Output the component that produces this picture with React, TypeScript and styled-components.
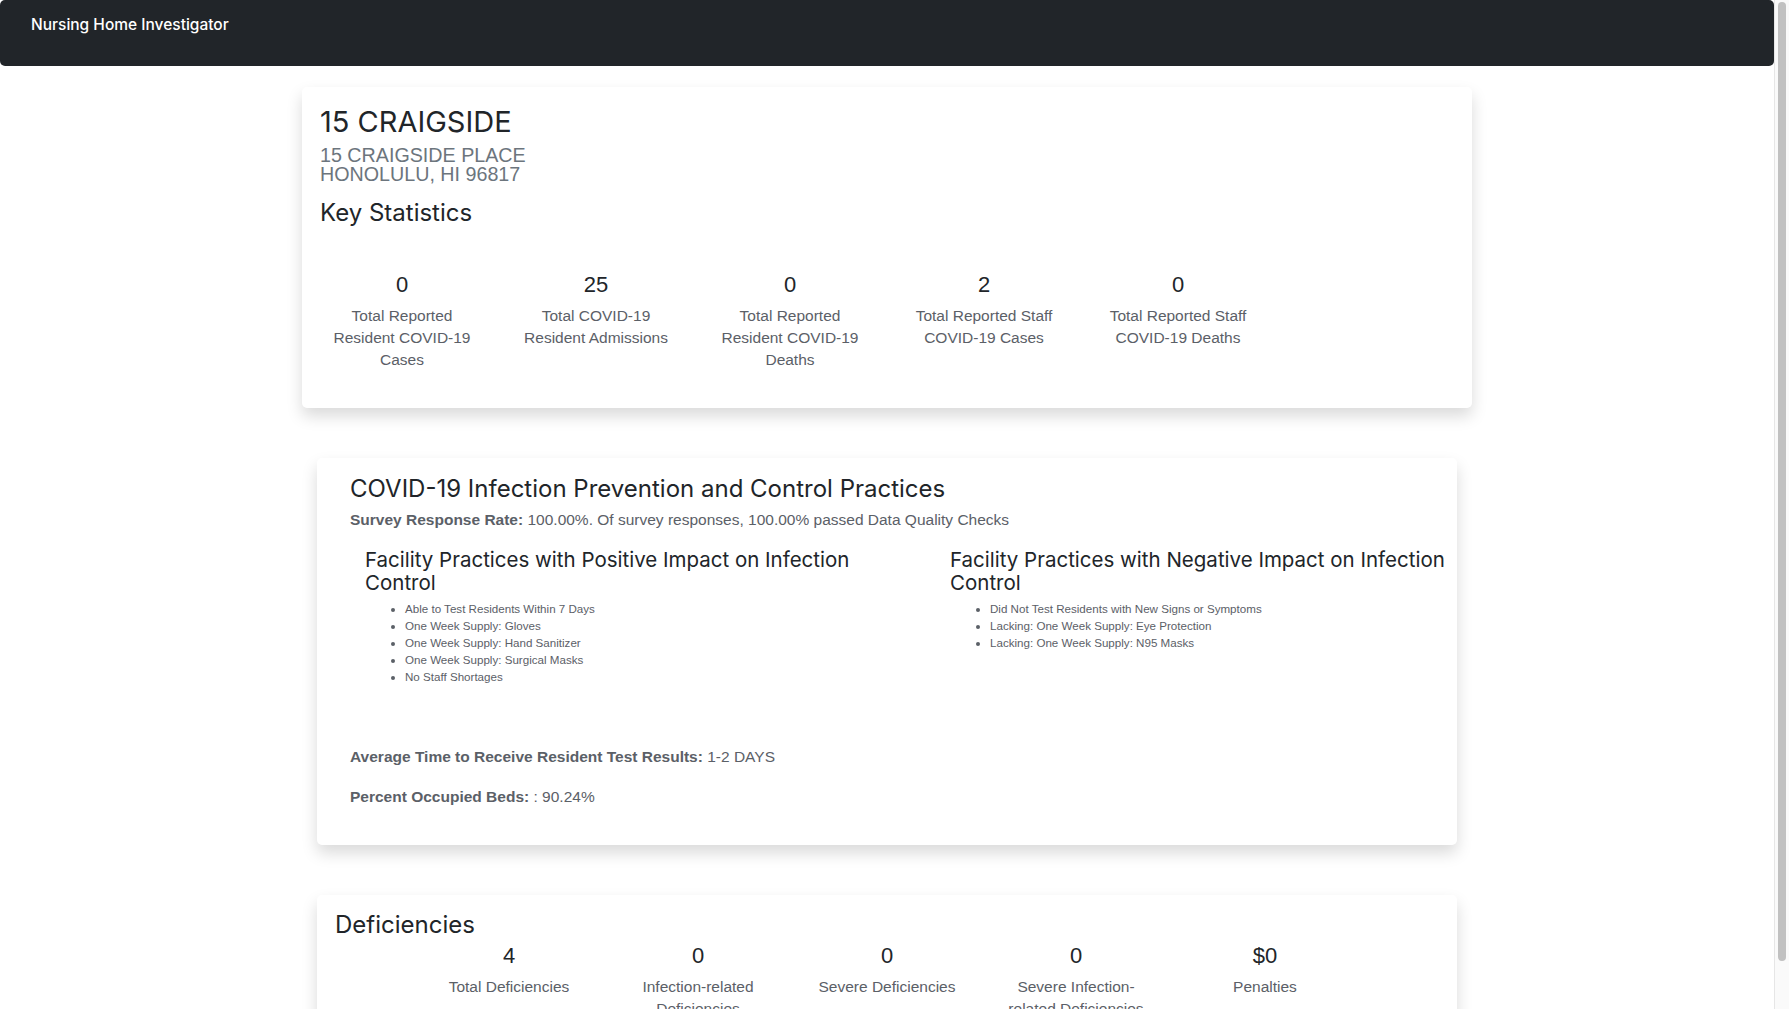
import styled, { createGlobalStyle } from "styled-components";

const GlobalStyle = createGlobalStyle`
  body {
    margin: 0;
    background: #fff;
    font-family: "Liberation Sans", Arial, sans-serif;
    font-size: 15.5px;
    color: #5b6067;
  }
  * {
    box-sizing: border-box;
  }
`;

const keyStats = [
  { value: "0", label: "Total Reported Resident COVID-19 Cases" },
  { value: "25", label: "Total COVID-19 Resident Admissions" },
  { value: "0", label: "Total Reported Resident COVID-19 Deaths" },
  { value: "2", label: "Total Reported Staff COVID-19 Cases" },
  { value: "0", label: "Total Reported Staff COVID-19 Deaths" },
];

const deficiencies = [
  { value: "4", label: "Total Deficiencies" },
  { value: "0", label: "Infection-related Deficiencies" },
  { value: "0", label: "Severe Deficiencies" },
  { value: "0", label: "Severe Infection-related Deficiencies" },
  { value: "$0", label: "Penalties" },
];

const positive = [
  "Able to Test Residents Within 7 Days",
  "One Week Supply: Gloves",
  "One Week Supply: Hand Sanitizer",
  "One Week Supply: Surgical Masks",
  "No Staff Shortages",
];

const negative = [
  "Did Not Test Residents with New Signs or Symptoms",
  "Lacking: One Week Supply: Eye Protection",
  "Lacking: One Week Supply: N95 Masks",
];

function App() {
  return (
    <Shell>
      <GlobalStyle />
      <Page>
        <Navbar>
          <Brand>Nursing Home Investigator</Brand>
        </Navbar>
        <Main>
          <Card $width={1170} $pad="15px 18px 37px">
            <FacilityName>15 CRAIGSIDE</FacilityName>
            <Address>
              15 CRAIGSIDE PLACE
              <br />
              HONOLULU, HI 96817
            </Address>
            <SectionTitle $mt={13}>Key Statistics</SectionTitle>
            <StatRow $col={194} $mt={42} $edge={-15}>
              {keyStats.map((s, i) => (
                <Stat key={i}>
                  <StatValue>{s.value}</StatValue>
                  <StatLabel>{s.label}</StatLabel>
                </Stat>
              ))}
            </StatRow>
          </Card>

          <Card $width={1140} $pad="15px 33px 37px">
            <SectionTitle>COVID-19 Infection Prevention and Control Practices</SectionTitle>
            <InfoLine $mt={4}>
              <b>Survey Response Rate:</b> 100.00%. Of survey responses, 100.00% passed Data
              Quality Checks
            </InfoLine>
            <PracticeGrid>
              <PracticeCol>
                <PracticeHeading>
                  Facility Practices with Positive Impact on Infection Control
                </PracticeHeading>
                <PracticeList>
                  {positive.map((p) => (
                    <li key={p}>{p}</li>
                  ))}
                </PracticeList>
              </PracticeCol>
              <PracticeCol>
                <PracticeHeading>
                  Facility Practices with Negative Impact on Infection Control
                </PracticeHeading>
                <PracticeList>
                  {negative.map((p) => (
                    <li key={p}>{p}</li>
                  ))}
                </PracticeList>
              </PracticeCol>
            </PracticeGrid>
            <InfoLine $mt={61}>
              <b>Average Time to Receive Resident Test Results:</b> 1-2 DAYS
            </InfoLine>
            <InfoLine $mt={18}>
              <b>Percent Occupied Beds:</b> : 90.24%
            </InfoLine>
          </Card>

          <Card $width={1140} $pad="14px 18px 30px">
            <SectionTitle>Deficiencies</SectionTitle>
            <StatRow $col={189} $mt={1} $edge={-15} $center>
              {deficiencies.map((s, i) => (
                <Stat key={i}>
                  <StatValue>{s.value}</StatValue>
                  <StatLabel>{s.label}</StatLabel>
                </Stat>
              ))}
            </StatRow>
          </Card>
        </Main>
      </Page>
      <ScrollTrack>
        <ScrollThumb />
      </ScrollTrack>
    </Shell>
  );
}

export default App;

const Shell = styled.div`
  display: flex;
  height: 100vh;
  overflow: hidden;
`;

const Page = styled.div`
  flex: 1;
  min-width: 0;
  overflow: hidden;
`;

const ScrollTrack = styled.div`
  flex: none;
  width: 15px;
  height: 100%;
  background: #fafafa;
  border-left: 1px solid #e6e6e6;
  padding: 2px 3px 48px 3px;
`;

const ScrollThumb = styled.div`
  height: 100%;
  border-radius: 4px;
  background: #c1c1c1;
`;

const Navbar = styled.nav`
  height: 66px;
  width: 100%;
  background: #212529;
  border-radius: 5px;
  padding: 13px 31px;
`;

const Brand = styled.span`
  display: block;
  color: #fff;
  font-family: Inter, "Noto Sans", sans-serif;
  font-weight: 500;
  font-size: 15.5px;
  line-height: 24px;
`;

const Main = styled.main`
  display: flex;
  flex-direction: column;
  align-items: center;
  gap: 50px;
  padding: 21px 0 16px;
`;

const Card = styled.section<{ $width: number; $pad: string }>`
  flex: none;
  width: ${(p) => p.$width}px;
  padding: ${(p) => p.$pad};
  background: #fff;
  border-radius: 5px;
  box-shadow: 0 8px 16px rgba(0, 0, 0, 0.15);
`;

const FacilityName = styled.h2`
  margin: 0;
  font-family: Inter, "Noto Sans", sans-serif;
  font-weight: 400;
  font-size: 29px;
  line-height: 40px;
  color: #212529;
`;

const Address = styled.p`
  margin: 4px 0 0;
  font-size: 19.7px;
  line-height: 19px;
  color: #6c757d;
`;

const SectionTitle = styled.h3<{ $mt?: number }>`
  margin: ${(p) => p.$mt ?? 0}px 0 0;
  font-family: Inter, "Noto Sans", sans-serif;
  font-weight: 400;
  font-size: 24px;
  line-height: 32px;
  color: #212529;
`;

const StatRow = styled.div<{ $col: number; $mt: number; $edge: number; $center?: boolean }>`
  display: grid;
  grid-template-columns: repeat(5, ${(p) => p.$col}px);
  justify-content: ${(p) => (p.$center ? "center" : "start")};
  margin: ${(p) => p.$mt}px ${(p) => p.$edge}px 0;
`;

const Stat = styled.div`
  padding: 0 15px;
  text-align: center;
`;

const StatValue = styled.div`
  font-size: 22px;
  line-height: 28px;
  color: #212529;
  margin-bottom: 6px;
`;

const StatLabel = styled.div`
  font-size: 15.5px;
  line-height: 22px;
  color: #5b6067;
`;

const InfoLine = styled.p<{ $mt: number }>`
  margin: ${(p) => p.$mt}px 0 0;
  font-size: 15.5px;
  line-height: 22px;
  color: #5b6067;

  b {
    font-weight: 700;
  }
`;

const PracticeGrid = styled.div`
  display: grid;
  grid-template-columns: 585px 585px;
  margin-top: 17px;
`;

const PracticeCol = styled.div`
  padding: 0 15px;
`;

const PracticeHeading = styled.h4`
  margin: 0;
  max-width: 530px;
  font-family: Inter, "Noto Sans", sans-serif;
  font-weight: 400;
  font-size: 20.5px;
  line-height: 23px;
  color: #212529;
`;

const PracticeList = styled.ul`
  margin: 6px 0 0;
  padding-left: 40px;
  font-size: 11.6px;
  line-height: 17px;
  color: #5b6067;
`;
